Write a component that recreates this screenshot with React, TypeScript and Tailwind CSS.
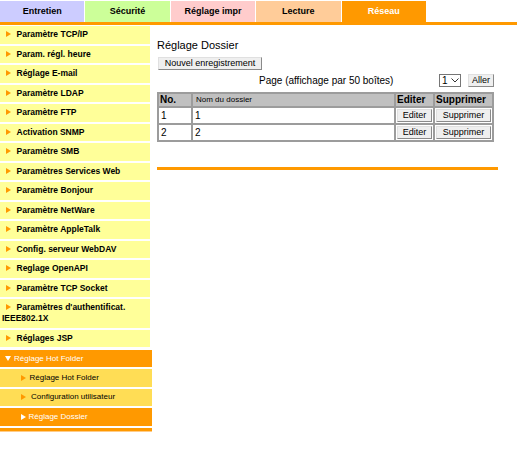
import React from "react";

const Arrow = ({ color = "#ff9900", className = "" }: { color?: string; className?: string }) => (
  <svg width="5" height="6" viewBox="0 0 5 6" className={"inline-block align-[0px] " + className}>
    <polygon points="0,0 5,3 0,6" fill={color} />
  </svg>
);

const mainItems: string[] = [
  "Paramètre TCP/IP",
  "Param. régl. heure",
  "Réglage E-mail",
  "Paramètre LDAP",
  "Paramètre FTP",
  "Activation SNMP",
  "Paramètre SMB",
  "Paramètres Services Web",
  "Paramètre Bonjour",
  "Paramètre NetWare",
  "Paramètre AppleTalk",
  "Config. serveur WebDAV",
  "Reglage OpenAPI",
  "Paramètre TCP Socket",
  "Paramètres d'authentificat. IEEE802.1X",
  "Réglages JSP",
];

const tabs = [
  { label: "Entretien", cls: "bg-[#ccccff] text-black" },
  { label: "Sécurité", cls: "bg-[#ccff99] text-black" },
  { label: "Réglage impr", cls: "bg-[#ffcccc] text-black" },
  { label: "Lecture", cls: "bg-[#ffcc99] text-black" },
  { label: "Réseau", cls: "bg-[#ff9900] text-white" },
];

const btn =
  "bg-[#efefef] border border-t-[#e0e0e0] border-l-[#e0e0e0] border-r-[#8a8a8a] border-b-[#8a8a8a] text-black";

export default function App() {
  return (
    <div className="w-[517px] h-[450px] bg-white font-['Liberation_Sans',Arial,sans-serif] text-black overflow-hidden">
      {/* Tabs */}
      <div className="flex gap-[1px] pt-[1px] h-[22px]">
        {tabs.map((t) => (
          <div
            key={t.label}
            className={"w-[84.4px] h-full flex items-center justify-center text-[9px] font-bold " + t.cls}
          >
            {t.label}
          </div>
        ))}
      </div>
      <div className="h-[3px] bg-[#ff9900]" />

      <div className="flex">
        {/* Sidebar */}
        <div className="w-[152px] flex flex-col gap-[2px] pt-[1px]">
          {mainItems.map((it) => (
            <div
              key={it}
              className="w-[150px] bg-[#ffff99] min-h-[17.5px] py-[3.25px] pl-[2px] pr-[2px] text-[8.5px] leading-[11px] font-bold"
            >
              <Arrow className="ml-[4px] mr-[5.5px]" />
              {it}
            </div>
          ))}
          <div className="mt-[0.5px] w-[152px] h-[17.5px] bg-[#ff9900] text-white text-[8px] leading-[11px] flex items-center pl-[5px]">
            <svg width="6" height="5" viewBox="0 0 6 5" className="mr-[3px]">
              <polygon points="0,0 6,0 3,5" fill="#ffffff" />
            </svg>
            Réglage Hot Folder
          </div>
          <div className="w-[152px] h-[17.5px] bg-[#ffdd55] text-[8px] flex items-center pl-[20.5px]">
            <Arrow className="mr-[4px]" />
            Réglage Hot Folder
          </div>
          <div className="w-[152px] h-[17.5px] bg-[#ffdd55] text-[8px] flex items-center pl-[21px]">
            <Arrow className="mr-[5px]" />
            Configuration utilisateur
          </div>
          <div className="w-[152px] h-[17.5px] bg-[#ff9900] text-white text-[8px] flex items-center pl-[20.5px]">
            <Arrow color="#ffffff" className="mr-[3px]" />
            Réglage Dossier
          </div>
          <div className="w-[152px]">
            <div className="h-[3px] bg-[#ff9900]" />
            <div className="h-[1.5px] bg-[#ffcc88]" />
          </div>
        </div>

        {/* Main */}
        <div className="ml-[5px] w-[342px] flex flex-col">
          <div className="mt-[13px] text-[11px] leading-[14px]">Réglage Dossier</div>
          <div className="mt-[5px] flex">
            <button className={"block h-[13px] w-[104px] ml-[1px] text-[9px] leading-[11px] " + btn}>
              Nouvel enregistrement
            </button>
          </div>
          <div className="mt-[4px] w-[337px] h-[13px] flex items-center">
            <div className="ml-[102px] text-[10px] leading-[12px]">Page (affichage par 50 boîtes)</div>
            <div className="flex-1" />
            <div className="h-[13px] w-[22px] border border-[#767676] bg-white flex items-center pl-[2px] text-[10px]">
              <span className="leading-[11px]">1</span>
              <svg width="8" height="5" viewBox="0 0 8 5" className="ml-[3px]">
                <polyline points="0.5,0.5 4,4 7.5,0.5" fill="none" stroke="#333" strokeWidth="1" />
              </svg>
            </div>
            <button className={"block ml-[7px] h-[13px] w-[26px] text-[9px] leading-[11px] " + btn}>Aller</button>
          </div>

          <table className="mt-[5px] w-[337px] border-separate border-spacing-[2px] bg-[#9c9c9c] text-[10px] leading-[12px]">
            <thead>
              <tr>
                <th className="h-[12px] w-[32px] bg-[#c0c0c0] text-left font-bold px-[1px] py-0">No.</th>
                <th className="h-[12px] bg-[#c0c0c0] text-left font-normal text-[8px] pl-[3px] py-0">Nom du dossier</th>
                <th className="h-[12px] w-[37px] bg-[#c0c0c0] text-left font-bold px-[1px] py-0">Editer</th>
                <th className="h-[12px] w-[57px] bg-[#c0c0c0] text-left font-bold px-[1px] py-0">Supprimer</th>
              </tr>
            </thead>
            <tbody>
              {["1", "2"].map((n) => (
                <tr key={n}>
                  <td className="h-[15px] bg-white px-[2px] py-0">{n}</td>
                  <td className="h-[15px] bg-white px-[2px] py-0">{n}</td>
                  <td className="h-[15px] bg-white p-[1px]">
                    <button className={"block w-full h-[13px] text-[9px] leading-[11px] " + btn}>Editer</button>
                  </td>
                  <td className="h-[15px] bg-white p-[1px]">
                    <button className={"block w-full h-[13px] text-[9px] leading-[11px] " + btn}>Supprimer</button>
                  </td>
                </tr>
              ))}
            </tbody>
          </table>

          <div className="mt-[25px] h-[3px] w-[341px] bg-[#ff9900]" />
        </div>
      </div>
    </div>
  );
}
